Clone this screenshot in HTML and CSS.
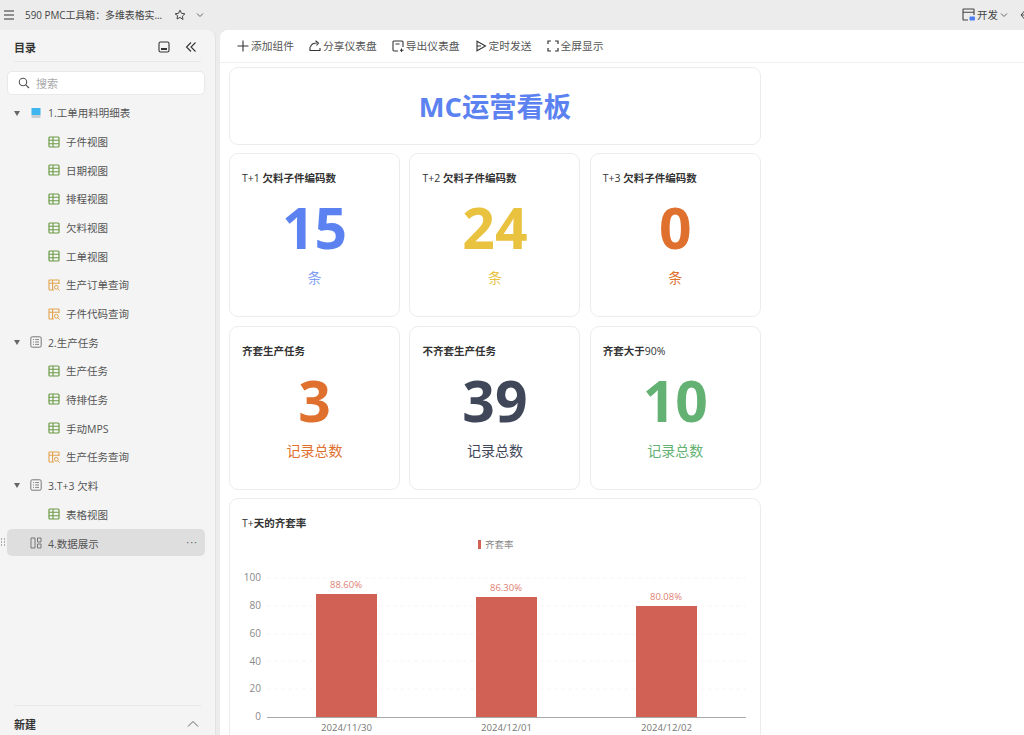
FILE: index.html
```html
<!DOCTYPE html>
<html lang="zh">
<head>
<meta charset="utf-8">
<title>MC运营看板</title>
<link rel="stylesheet" href="styles.css">
</head>
<body>
<svg class="defs" width="0" height="0" aria-hidden="true">
  <symbol id="grid" viewBox="0 0 12 12"><rect x="1" y="1" width="10" height="10" rx="1" fill="none" stroke="#6a9a45" stroke-width="1.2"/><path d="M1 4.300H11M1 7.700H11M5 1V11" fill="none" stroke="#6a9a45" stroke-width="1.100"/></symbol>
  <symbol id="query" viewBox="0 0 12 12"><path d="M6 11H1.500a.5.5 0 0 1-.5-.5v-9a.5.5 0 0 1 .5-.5h9a.5.5 0 0 1 .5.5V5M1 4.200H11M4.600 1V11" fill="none" stroke="#e3a34e" stroke-width="1.100"/><circle cx="8.300" cy="8.300" r="1.900" fill="none" stroke="#e3a34e" stroke-width="1"/><path d="M9.800 9.800L11.600 11.600" stroke="#e3a34e" stroke-width="1"/></symbol>
  <symbol id="list" viewBox="0 0 12 12"><rect x=".8" y=".8" width="10.400" height="10.400" rx="1.400" fill="none" stroke="#777" stroke-width="1"/><path d="M3 3.600h1M5.200 3.600H9M3 6h1M5.200 6H9M3 8.400h1M5.200 8.400H9" stroke="#777" stroke-width=".9"/></symbol>
</svg>

<header class="topbar">
  <div class="top-left">
    <svg class="menu-icon" viewBox="0 0 10 10"><path d="M0 1H10M0 5H10M0 9H10" stroke="#333" stroke-width="1"/></svg>
    <span class="doc-title">590 PMC工具箱：多维表格实...</span>
    <svg class="star" viewBox="0 0 12 12"><path d="M6 1.200l1.500 3.100 3.400.5-2.500 2.300.6 3.400L6 8.400 3 10l.6-3.400L1.100 4.800l3.400-.5z" fill="none" stroke="#444" stroke-width="1"/></svg>
    <svg class="caret" viewBox="0 0 8 6"><path d="M1 1.500L4 4.500 7 1.500" fill="none" stroke="#666" stroke-width="1"/></svg>
  </div>
  <div class="top-right">
    <svg class="dev-icon" viewBox="0 0 13 13"><path d="M6 12H1.600a.6.6 0 0 1-.6-.6V1.600A.6.6 0 0 1 1.600 1h9.800a.6.6 0 0 1 .6.6V7M1 4.200H12" fill="none" stroke="#444" stroke-width="1.100"/><rect x="7.500" y="8.500" width="5.500" height="4" rx="1" fill="#4d7df0"/></svg>
    <span class="dev-label">开发</span>
    <svg class="caret" viewBox="0 0 8 6"><path d="M1 1.500L4 4.500 7 1.500" fill="none" stroke="#666" stroke-width="1"/></svg>
    <svg class="back" viewBox="0 0 8 10"><path d="M4.500 1L1 5l3.500 4M2 5h6" fill="none" stroke="#444" stroke-width="1"/></svg>
  </div>
</header>

<div class="shell">
  <aside class="sidebar">
    <div class="side-head">
      <span class="side-title">目录</span>
      <div class="side-tools">
        <svg class="tool" viewBox="0 0 12 12"><rect x="1" y="1" width="10" height="10" rx="1.500" fill="none" stroke="#333" stroke-width="1.100"/><rect x="3" y="7" width="6" height="2" fill="#333"/></svg>
        <svg class="tool" viewBox="0 0 12 12"><path d="M6 1.500L1.500 6 6 10.500M10.500 1.500L6 6l4.500 4.500" fill="none" stroke="#333" stroke-width="1.100"/></svg>
      </div>
    </div>
    <div class="search">
      <svg class="search-icon" viewBox="0 0 12 12"><circle cx="5" cy="5" r="3.700" fill="none" stroke="#555" stroke-width="1.100"/><path d="M7.800 7.800L11 11" stroke="#555" stroke-width="1.200"/></svg>
      <span>搜索</span>
    </div>
    <nav class="tree">
      <div class="row group"><i class="tri"></i><svg class="ic" viewBox="0 0 12 12"><rect x="1.500" y="1" width="9" height="7" fill="#3fb6ef"/><rect x="1.500" y="8" width="9" height="3" fill="#c9ced2"/></svg><span>1.工单用料明细表</span></div>
      <div class="row leaf"><svg class="ic"><use href="#grid"/></svg><span>子件视图</span></div>
      <div class="row leaf"><svg class="ic"><use href="#grid"/></svg><span>日期视图</span></div>
      <div class="row leaf"><svg class="ic"><use href="#grid"/></svg><span>排程视图</span></div>
      <div class="row leaf"><svg class="ic"><use href="#grid"/></svg><span>欠料视图</span></div>
      <div class="row leaf"><svg class="ic"><use href="#grid"/></svg><span>工单视图</span></div>
      <div class="row leaf"><svg class="ic"><use href="#query"/></svg><span>生产订单查询</span></div>
      <div class="row leaf"><svg class="ic"><use href="#query"/></svg><span>子件代码查询</span></div>
      <div class="row group"><i class="tri"></i><svg class="ic"><use href="#list"/></svg><span>2.生产任务</span></div>
      <div class="row leaf"><svg class="ic"><use href="#grid"/></svg><span>生产任务</span></div>
      <div class="row leaf"><svg class="ic"><use href="#grid"/></svg><span>待排任务</span></div>
      <div class="row leaf"><svg class="ic"><use href="#grid"/></svg><span>手动MPS</span></div>
      <div class="row leaf"><svg class="ic"><use href="#query"/></svg><span>生产任务查询</span></div>
      <div class="row group"><i class="tri"></i><svg class="ic"><use href="#list"/></svg><span>3.T+3 欠料</span></div>
      <div class="row leaf"><svg class="ic"><use href="#grid"/></svg><span>表格视图</span></div>
      <div class="row group active">
        <svg class="drag" viewBox="0 0 6 10"><path d="M1 1h1M4 1h1M1 4h1M4 4h1M1 7h1M4 7h1" stroke="#666" stroke-width="1.200"/></svg>
        <svg class="ic" viewBox="0 0 12 12"><path d="M1 1h4v10H1zM7.500 1H11v4H7.500zM7.500 7H11v4H7.500z" fill="none" stroke="#777" stroke-width="1"/></svg>
        <span>4.数据展示</span>
        <span class="more">···</span>
      </div>
    </nav>
    <div class="side-foot">
      <span class="side-title">新建</span>
      <svg class="foot-caret" viewBox="0 0 12 8"><path d="M1 6.500L6 1.500l5 5" fill="none" stroke="#666" stroke-width="1"/></svg>
    </div>
  </aside>

  <main class="main">
    <div class="toolbar">
      <span class="tb"><svg viewBox="0 0 12 12"><path d="M6 .5V11.500M.5 6H11.500" stroke="#333" stroke-width="1.100"/></svg>添加组件</span>
      <span class="tb"><svg viewBox="0 0 12 12"><path d="M1 7v3.500h10V8M1.500 7C2 4.500 4 3 8 3M6.500 .8L9.500 3 7.500 5.500" fill="none" stroke="#333" stroke-width="1.100"/></svg>分享仪表盘</span>
      <span class="tb"><svg viewBox="0 0 12 12"><path d="M6 11H2a1 1 0 0 1-1-1V2a1 1 0 0 1 1-1h8a1 1 0 0 1 1 1v5M3.500 4h4M9.500 8.500V12M8 10.200h3.500" fill="none" stroke="#333" stroke-width="1.100"/></svg>导出仪表盘</span>
      <span class="tb"><svg viewBox="0 0 12 12"><path d="M2 1.200L10.500 6 2 10.800zM2 6H6" fill="none" stroke="#333" stroke-width="1.100"/></svg>定时发送</span>
      <span class="tb"><svg viewBox="0 0 12 12"><path d="M1 4V1h3M8 1h3v3M11 8v3H8M4 11H1V8" fill="none" stroke="#333" stroke-width="1.200"/></svg>全屏显示</span>
    </div>
    <div class="board">
      <section class="card banner">MC运营看板</section>
      <div class="kpis">
        <section class="card kpi"><h3>T+1 <b>欠料子件编码数</b></h3><div class="num blue">15</div><div class="unit blue-l">条</div></section>
        <section class="card kpi"><h3>T+2 <b>欠料子件编码数</b></h3><div class="num yellow">24</div><div class="unit yellow">条</div></section>
        <section class="card kpi"><h3>T+3 <b>欠料子件编码数</b></h3><div class="num orange">0</div><div class="unit orange">条</div></section>
        <section class="card kpi"><h3><b>齐套生产任务</b></h3><div class="num orange">3</div><div class="unit orange">记录总数</div></section>
        <section class="card kpi"><h3><b>不齐套生产任务</b></h3><div class="num slate">39</div><div class="unit slate">记录总数</div></section>
        <section class="card kpi"><h3><b>齐套大于</b>90%</h3><div class="num green">10</div><div class="unit green">记录总数</div></section>
      </div>
      <section class="card chart-card">
        <h3>T+<b>天的齐套率</b></h3>
        <svg class="chart" viewBox="0 0 532 237" width="532" height="237">
          <rect x="248" y="41" width="3" height="9" fill="#d16155"/>
          <text x="255" y="49" class="legend">齐套率</text>
          <g stroke="#f6f6f6" stroke-dasharray="4 3">
            <path d="M37 79H516M37 107H516M37 135H516M37 162H516M37 190H516"/>
          </g>
          <g class="ax">
            <text x="31" y="82">100</text><text x="31" y="110">80</text><text x="31" y="138">60</text><text x="31" y="166">40</text><text x="31" y="193">20</text><text x="31" y="221">0</text>
          </g>
          <rect x="86" y="95" width="61" height="123" fill="#d16155"/>
          <rect x="246" y="98" width="61" height="120" fill="#d16155"/>
          <rect x="406" y="107" width="61" height="111" fill="#d16155"/>
          <path d="M37 218.500H516" stroke="#a8a8a8"/>
          <g class="val">
            <text x="116" y="89">88.60%</text><text x="276" y="92">86.30%</text><text x="436" y="101">80.08%</text>
          </g>
          <g class="cat">
            <text x="116.500" y="232">2024/11/30</text><text x="276.500" y="232">2024/12/01</text><text x="436.500" y="232">2024/12/02</text>
          </g>
        </svg>
      </section>
    </div>
  </main>
</div>
</body>
</html>
```

FILE: styles.css
```css
* { box-sizing: border-box; }
html, body { height: 100%; }
body {
  margin: 0;
  height: 735px;
  overflow: hidden;
  background: #ececec;
  color: #333;
  font-family: "Open Sans", "Noto Sans CJK SC", sans-serif;
  font-size: 11px;
  display: flex;
  flex-direction: column;
}
.defs { position: absolute; }
svg { display: block; flex: none; }

.topbar {
  height: 30px;
  flex: none;
  display: flex;
  justify-content: space-between;
  align-items: center;
  padding: 0 0 1px 4px;
}
.top-left, .top-right { display: flex; align-items: center; }
.menu-icon { width: 10px; height: 10px; }
.doc-title { margin-left: 11px; font-size: 9.9px; color: #444; width: 141px; white-space: nowrap; }
.star { width: 12px; height: 12px; margin-left: 8px; }
.caret { width: 8px; height: 6px; margin-left: 10px; }
.dev-icon { width: 13px; height: 13px; }
.dev-label { margin-left: 2px; font-size: 10.5px; color: #444; }
.top-right .caret { margin-left: 2px; }
.back { width: 8px; height: 10px; margin: 0 -4px 0 12px; }

.shell { flex: 1; display: flex; min-height: 0; gap: 4px; }

.sidebar {
  width: 216px;
  flex: none;
  background: #f4f4f4;
  border-radius: 0 8px 0 0;
  border-right: 1px solid #e2e2e2;
  padding: 0 0 0 7px;
  display: flex;
  flex-direction: column;
}
.side-head {
  margin: 0 14px 0 7px;
  height: 32px;
  padding-top: 2px;
  display: flex;
  justify-content: space-between;
  align-items: center;
  border-bottom: 1px solid #e8e8e8;
}
.side-title { font-size: 11px; font-weight: 700; color: #333; }
.side-tools { display: flex; gap: 15px; align-items: center; margin-right: 4px; }
.tool { width: 12px; height: 12px; }
.search {
  margin-top: 9px;
  width: 198px;
  height: 24px;
  background: #fff;
  border: 1px solid #e9e9e9;
  border-radius: 5px;
  display: flex;
  align-items: center;
  padding-left: 10px;
  gap: 6px;
  color: #aaa;
  font-size: 11px;
}
.search-icon { width: 12px; height: 12px; }

.tree { margin-top: 3.6px; flex: 1; }
.row {
  height: 28.67px;
  display: flex;
  align-items: center;
  color: #555;
  font-size: 10.5px;
  width: 198px;
  position: relative;
}
.row .ic { width: 12px; height: 12px; }
.group { padding-left: 23px; }
.group .ic { margin-right: 6px; }
.leaf { padding-left: 41px; }
.leaf .ic { margin-right: 6px; }
.tri {
  position: absolute;
  left: 7px;
  top: 12px;
  border-left: 3px solid transparent;
  border-right: 3px solid transparent;
  border-top: 5px solid #666;
}
.active { background: #dedede; border-radius: 5px; height: 27px; margin-top: 1px; padding-top: 1px; }
.drag { position: absolute; left: -7px; top: 9px; width: 6px; height: 10px; }
.more { position: absolute; right: 7px; top: 5px; font-size: 11px; color: #666; letter-spacing: 1px; }

.side-foot {
  margin: 0 14px 0 7px;
  height: 30px;
  padding: 6px 2px 0 0;
  flex: none;
  display: flex;
  justify-content: space-between;
  align-items: center;
  border-top: 1px solid #e8e8e8;
}
.foot-caret { width: 12px; height: 8px; }

.main {
  flex: 1;
  background: #fff;
  border-radius: 8px 0 0 0;
  min-width: 0;
  overflow: hidden;
}
.toolbar {
  height: 33px;
  display: flex;
  align-items: center;
  padding: 0 0 1px 17px;
  gap: 15px;
  border-bottom: 1px solid #f0f0f0;
}
.tb { display: flex; align-items: center; gap: 2px; font-size: 10.75px; color: #555; }
.tb svg { width: 12px; height: 12px; }

.board {
  padding: 4px 0 0 9px;
  width: 541px;
  display: flex;
  flex-direction: column;
  gap: 8px;
}
.card {
  background: #fff;
  border: 1px solid #ececec;
  border-radius: 9px;
}
.banner {
  height: 78px;
  display: flex;
  align-items: center;
  justify-content: center;
  font-size: 27.3px;
  font-weight: 700;
  color: #5b82f0;
  padding-bottom: 2px;
}
.kpis { display: grid; grid-template-columns: repeat(3, 171px); gap: 9px 9.4px; }
.kpi {
  height: 164px;
  padding: 17px 12px 0;
  text-align: center;
}
h3 {
  margin: 0;
  font-size: 10.5px;
  font-weight: 400;
  color: #333;
  text-align: left;
  line-height: 15px;
}
h3 b { font-weight: 700; }
.num { font-size: 57px; font-weight: 700; line-height: 64px; margin-top: 9px; }
.unit { font-size: 14px; line-height: 20px; margin-top: 9px; }
.blue { color: #5b82f0; }
.blue-l { color: #7f9ef3; }
.yellow { color: #e9c23f; }
.orange { color: #e0702e; }
.slate { color: #3f4759; }
.green { color: #64b273; }
.chart-card { height: 260px; padding: 17px 0 0 12px; position: relative; }
.chart-card h3 { margin-bottom: -32px; }
.chart { margin-left: -12px; }
.chart text { font-family: "Open Sans", "Noto Sans CJK SC", sans-serif; }
.legend { font-size: 9.5px; fill: #888; }
.ax text { font-size: 10px; fill: #888; text-anchor: end; }
.val text { font-size: 9.5px; fill: #e07f75; text-anchor: middle; }
.cat text { font-size: 9.6px; fill: #777; text-anchor: middle; }
```
